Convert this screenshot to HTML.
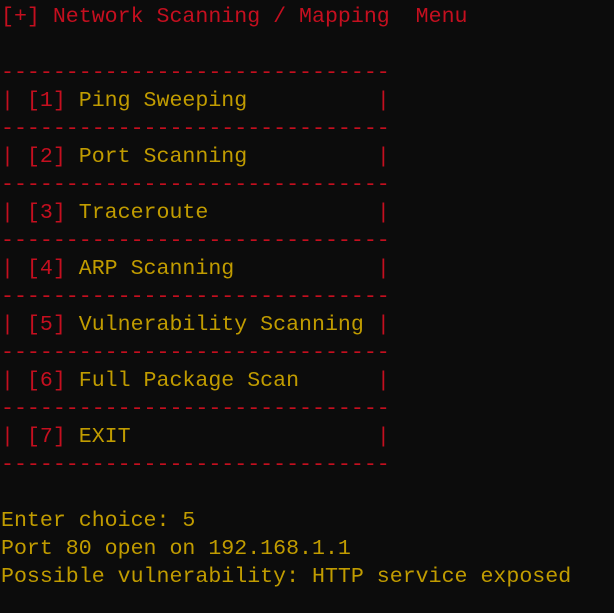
<!DOCTYPE html><html><head><style>
body{margin:0;background:#0c0c0c;width:614px;height:613px;overflow:hidden}
pre{margin:0;padding:3px 0 0 1px;font-family:"Liberation Mono",monospace;font-size:21.6px;line-height:28px;color:#c19c00;white-space:pre}
.r{color:#c50f1f}
</style></head><body><pre><span class="r">[+] Network Scanning / Mapping  Menu</span>

<span class="r">------------------------------</span>
<span class="r">| [1]</span> Ping Sweeping          <span class="r">|</span>
<span class="r">------------------------------</span>
<span class="r">| [2]</span> Port Scanning          <span class="r">|</span>
<span class="r">------------------------------</span>
<span class="r">| [3]</span> Traceroute             <span class="r">|</span>
<span class="r">------------------------------</span>
<span class="r">| [4]</span> ARP Scanning           <span class="r">|</span>
<span class="r">------------------------------</span>
<span class="r">| [5]</span> Vulnerability Scanning <span class="r">|</span>
<span class="r">------------------------------</span>
<span class="r">| [6]</span> Full Package Scan      <span class="r">|</span>
<span class="r">------------------------------</span>
<span class="r">| [7]</span> EXIT                   <span class="r">|</span>
<span class="r">------------------------------</span>

Enter choice: 5
Port 80 open on 192.168.1.1
Possible vulnerability: HTTP service exposed</pre></body></html>
